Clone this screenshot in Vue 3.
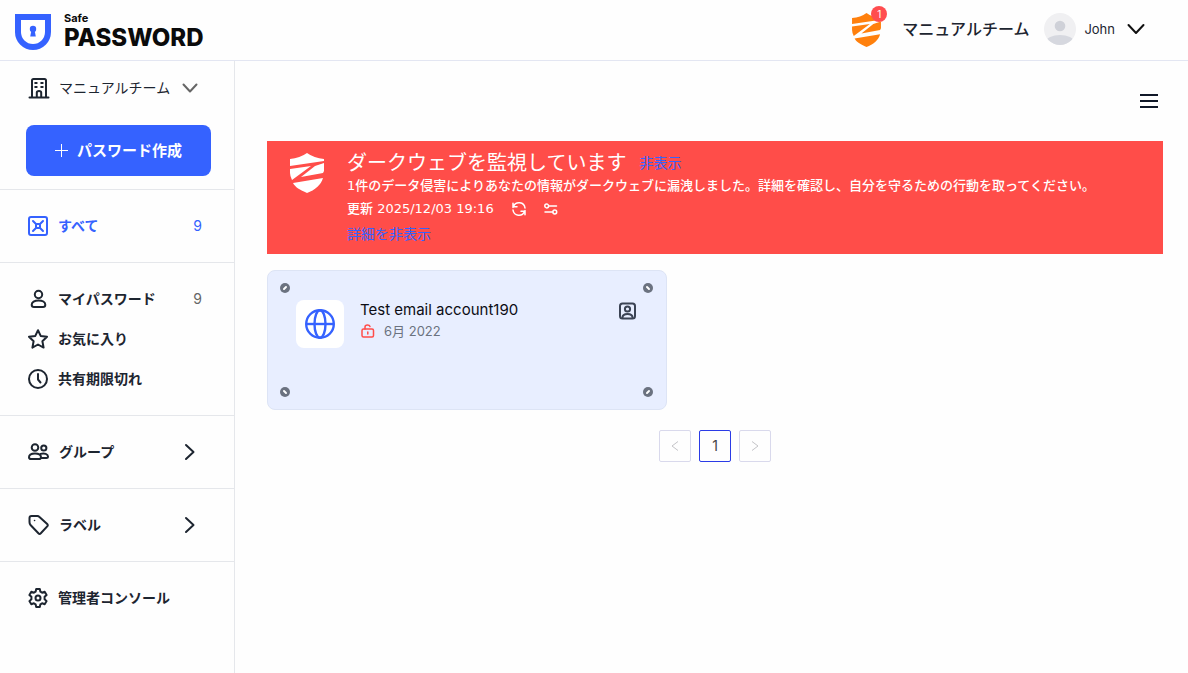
<script setup>
const mainItems = [
  { id: 'mine', label: 'マイパスワード', count: 9 },
  { id: 'star', label: 'お気に入り' },
  { id: 'clock', label: '共有期限切れ' },
]
const groups = [
  { id: 'group', label: 'グループ' },
  { id: 'label', label: 'ラベル' },
]
const screws = ['tl', 'tr', 'bl', 'br']
const shield = 'M0 6Q10 5 17 0q7 5 17 6v2L0 13zM0 16l21-3L2 27Q0 23 0 20zM34 10v8l-1 2-22 4 14-11zM3 30l30-5c-2 7-8 12-16 15C10 37 5 34 3 30z'
</script>

<template>
  <div class="app">
    <header class="header">
      <a href="#" class="brand">
        <svg width="36" height="36" viewBox="0 0 36 36">
          <path d="M0 0h36v18a18 18 0 0 1-36 0z" fill="#3562ff" />
          <path d="M6 6h24v12a12 12 0 0 1-24 0z" fill="#fff" />
          <circle cx="18" cy="15" r="3.200" fill="#3562ff" />
          <path d="M16.500 16h3l1.300 6.500h-5.600z" fill="#3562ff" />
        </svg>
        <span class="brand-text"><span class="brand-small">Safe</span><span class="brand-big">PASSWORD</span></span>
      </a>
      <div class="account">
        <button class="alert" aria-label="通知">
          <svg width="29" height="34" viewBox="0 0 34 40">
            <path :d="shield" fill="#ff800d" />
          </svg>
          <span class="badge">1</span>
        </button>
        <span class="team-name">マニュアルチーム</span>
        <button class="user">
          <svg width="32" height="32" viewBox="0 0 32 32">
            <defs><clipPath id="avatar-clip"><circle cx="16" cy="16" r="16" /></clipPath></defs>
            <g clip-path="url(#avatar-clip)">
              <path d="M0 0h32v32H0z" fill="#f0f0f2" />
              <circle cx="16" cy="13" r="5.300" fill="#cfd1d8" />
              <ellipse cx="16" cy="29" rx="14" ry="7" fill="#d6d8df" />
            </g>
          </svg>
          <span>John</span>
          <svg class="user-arrow" width="18" height="12" viewBox="0 0 18 12"><path d="m1.500 2 7.500 8 7.500-8" class="stroke thick" /></svg>
        </button>
      </div>
    </header>

    <div class="body">
      <aside class="sidebar">
        <div class="top">
          <button class="team">
            <svg width="22" height="22" viewBox="0 0 22 22" class="stroke">
              <path d="M1.500 20.500h19M4 20V3.500Q4 2 5.500 2h11Q18 2 18 3.500V20M8.800 20v-4.500q0-1.500 2.200-1.500t2.200 1.500V20" />
              <path d="M7.200 6h1.500M13.200 6h1.500M7.200 10h1.500M13.200 10h1.500" />
            </svg>
            <span>マニュアルチーム</span>
            <svg class="team-arrow" width="16" height="10" viewBox="0 0 16 10"><path d="m1.500 1.500 6.500 7 6.500-7" class="stroke grey" /></svg>
          </button>
          <button class="create">
            <svg width="13" height="13" viewBox="0 0 13 13"><path d="M6.500 0v13M0 6.500h13" stroke="#fff" fill="none" /></svg>
            <span>パスワード作成</span>
          </button>
        </div>

        <nav class="section">
          <a href="#" class="row active">
            <svg width="20" height="20" viewBox="0 0 20 20" class="stroke blue">
              <rect x="1" y="1" width="18" height="18" rx="2" />
              <path d="m5 5 3.500 3.500M15 5l-3.500 3.500M5 15l3.500-3.500M15 15l-3.500-3.500" />
              <rect x="8" y="8" width="4" height="4" rx="1" />
            </svg>
            <span>すべて</span><span class="count">9</span>
          </a>
        </nav>

        <nav class="section">
          <a v-for="item in mainItems" :key="item.id" href="#" class="row">
            <svg v-if="item.id === 'mine'" width="20" height="20" viewBox="0 0 20 20" class="stroke">
              <circle cx="10.500" cy="5.500" r="3.700" />
              <path d="M10.500 11.500c4 0 6.800 1.800 6.800 4.300 0 1.500-1 2.200-2.300 2.200H6c-1.300 0-2.300-.7-2.300-2.200 0-2.500 2.800-4.300 6.800-4.300z" />
            </svg>
            <svg v-else-if="item.id === 'star'" width="20" height="20" viewBox="0 0 20 20" class="stroke">
              <path d="m10 1.200 2.700 5.700 6.300.9-4.600 4.500 1.200 6.300L10 15.500l-5.600 3.100 1.200-6.300L1 7.800l6.300-.9z" />
            </svg>
            <svg v-else width="20" height="20" viewBox="0 0 20 20" class="stroke">
              <circle cx="10" cy="10" r="9" /><path d="M10 5v5.500l2.500 3" />
            </svg>
            <span>{{ item.label }}</span>
            <span v-if="item.count" class="count">{{ item.count }}</span>
          </a>
        </nav>

        <nav v-for="group in groups" :key="group.id" class="section">
          <button class="row">
            <svg v-if="group.id === 'group'" width="21" height="20" viewBox="0 0 21 20" class="stroke">
              <circle cx="7" cy="5.500" r="3.300" /><circle cx="15.800" cy="6" r="2.600" />
              <path d="M7 11.500c3.700 0 6 1.500 6 3.700 0 1.200-.8 1.800-2 1.800H3c-1.200 0-2-.6-2-1.800 0-2.200 2.300-3.700 6-3.700zM12.500 11.900c4-1.200 7.500.2 7.500 2.600 0 1-.7 1.500-1.700 1.500h-5.300" />
            </svg>
            <svg v-else width="21" height="20" viewBox="0 0 21 20" class="stroke">
              <path d="M1.500 7V3Q1.500 1 3.500 1h6q1 0 1.700.7l8 7.300q1.200 1.200 0 2.400l-6.400 6.900q-1.200 1.200-2.400 0L2.500 10q-1-1-1-3z" />
              <path d="M6.500 5.500h.1" stroke-width="1.500" />
            </svg>
            <span>{{ group.label }}</span>
            <svg class="chevron" width="12" height="18" viewBox="0 0 12 18"><path d="m2 2 7.500 7L2 16" class="stroke" /></svg>
          </button>
        </nav>

        <nav class="section last">
          <a href="#" class="row">
            <svg width="20" height="20" viewBox="0 0 20 20" class="stroke">
              <path d="M8.200 1h3.600l.6 2.700 1.700 1 2.600-.9 1.900 3.100-2 1.900v2.400l2 1.900-1.900 3.100-2.600-.9-1.700 1-.6 2.700H8.200l-.6-2.700-1.700-1-2.600.9-1.900-3.100 2-1.900V8.800l-2-1.900 1.900-3.100 2.600.9 1.700-1z" />
              <circle cx="10" cy="10" r="2.500" />
            </svg>
            <span>管理者コンソール</span>
          </a>
        </nav>
      </aside>

      <main class="main">
        <div class="toolbar">
          <button class="menu" aria-label="メニュー">
            <svg width="18" height="14" viewBox="0 0 18 14"><path d="M0 1h18M0 7h18M0 13h18" stroke="#101828" stroke-width="2" /></svg>
          </button>
        </div>

        <section class="banner">
          <svg class="banner-icon" width="34" height="40" viewBox="0 0 34 40">
            <path :d="shield" fill="#fff" />
          </svg>
          <div class="banner-text">
            <div class="banner-head"><h1>ダークウェブを監視しています</h1><a href="#">非表示</a></div>
            <p>1件のデータ侵害によりあなたの情報がダークウェブに漏洩しました。詳細を確認し、自分を守るための行動を取ってください。</p>
            <div class="updated">
              <span>更新 2025/12/03 19:16</span>
              <button aria-label="再読み込み">
                <svg width="14" height="14" viewBox="0 0 14 14" class="stroke white">
                  <path d="M1 5.500V1.200M1 4.800h4M1.500 4.500A6 6 0 0 1 13 6M13 8.500v4.300M13 9.200H9M12.500 9.500A6 6 0 0 1 1 8" />
                </svg>
              </button>
              <button aria-label="設定">
                <svg width="14" height="12" viewBox="0 0 14 12" class="stroke white">
                  <circle cx="2.700" cy="3" r="1.900" /><path d="M5 3h7.500M1 9h7.500" /><circle cx="10.800" cy="9" r="1.900" />
                </svg>
              </button>
            </div>
            <a href="#">詳細を非表示</a>
          </div>
        </section>

        <article class="card">
          <svg v-for="s in screws" :key="s" :class="['screw', s]" width="10" height="10" viewBox="0 0 10 10">
            <circle cx="5" cy="5" r="5" fill="#6b7280" /><path d="m4 6 2-2" stroke="#fff" stroke-width="2" stroke-linecap="round" />
          </svg>
          <div class="tile">
            <svg width="30" height="30" viewBox="0 0 30 30" fill="none" stroke="#3562ff" stroke-width="2.400">
              <circle cx="15" cy="15" r="13.800" /><ellipse cx="15" cy="15" rx="5.500" ry="13.800" /><path d="M1 15h28" />
            </svg>
          </div>
          <div class="info">
            <h2>Test email account190</h2>
            <div class="date">
              <svg width="14" height="14" viewBox="0 0 14 14" class="stroke red">
                <rect x="1" y="5" width="11.500" height="8" rx="1.500" /><path d="M4 5V3q0-2 2.500-2 2 0 2.500 1.500M6.800 8v2" />
              </svg>
              <span>6月 2022</span>
            </div>
          </div>
          <button class="contact" aria-label="アカウント">
            <svg width="17" height="18" viewBox="0 0 17 18" class="stroke slate">
              <rect x="1" y="1.500" width="15" height="15" rx="2.500" /><circle cx="8.500" cy="7" r="2.600" /><path d="M3.500 15.500c0-2.500 2-3.500 5-3.500s5 1 5 3.500" />
            </svg>
          </button>
        </article>

        <nav class="pages" aria-label="ページ">
          <button disabled aria-label="前"><svg width="8" height="12" viewBox="0 0 8 12"><path d="M7 1.500 1 6l6 4.500" fill="none" stroke="#c4c4c8" /></svg></button>
          <button class="current">1</button>
          <button disabled aria-label="次"><svg width="8" height="12" viewBox="0 0 8 12"><path d="m1 1.500 6 4.500-6 4.500" fill="none" stroke="#c4c4c8" /></svg></button>
        </nav>
      </main>
    </div>
  </div>
</template>

<style>
body { margin: 0; background: #fefefe; }
</style>

<style scoped>
.app { min-height: 100vh; display: flex; flex-direction: column; font: 14px/20px Inter, "Noto Sans CJK JP", sans-serif; color: #1d2530; }
.app * { box-sizing: border-box; }
button { font: inherit; color: inherit; border: 0; background: none; padding: 0; cursor: pointer; }
a { color: inherit; text-decoration: none; }
svg { display: block; flex: none; }
.stroke { fill: none; stroke: #1d2530; stroke-width: 2; stroke-linecap: round; stroke-linejoin: round; }
.grey { stroke: #666; }
.thick { stroke: #111; }
.blue { stroke: #3562ff; }
.white { stroke: #fff; stroke-width: 1.5; }
.red { stroke: #ff4d4a; stroke-width: 1.5; }
.slate { stroke: #3b4354; }
.header { height: 61px; display: flex; align-items: center; justify-content: space-between; padding: 0 43px 0 15px; border-bottom: 1px solid #e3e6f2; }
.brand { display: flex; align-items: center; gap: 13px; padding-top: 4px; color: #0b0b0b; }
.brand-text { display: flex; flex-direction: column; }
.brand-small { font-size: 11px; line-height: 12px; font-weight: 700; }
.brand-big { font-size: 24px; line-height: 28px; font-weight: 800; }
.account { display: flex; align-items: center; }
.alert { position: relative; margin-right: 21px; }
.badge { position: absolute; top: -7px; right: -6px; width: 16px; height: 16px; border-radius: 8px; background: #ff4d4f; color: #fff; font-size: 10px; line-height: 16px; text-align: center; }
.team-name { font-size: 16px; line-height: 20px; font-weight: 500; padding-bottom: 3px; margin-right: 15px; }
.user { display: flex; align-items: center; gap: 8px; padding-bottom: 2px; }
.user span { font-size: 13px; }
.user-arrow { margin-left: 4px; }
.body { flex: 1; display: flex; }
.sidebar { flex: 0 0 235px; border-right: 1px solid #e5e7eb; }
.top { padding: 7px 23px 13px 26px; border-bottom: 1px solid #e5e7eb; }
.team { display: flex; align-items: center; gap: 9px; height: 40px; padding-left: 2px; }
.team-arrow { margin-left: 3px; }
.create { display: flex; align-items: center; justify-content: center; gap: 9px; width: 100%; height: 51px; margin-top: 17px; border-radius: 8px; background: #3562ff; color: #fff; font-size: 15px; font-weight: 700; }
.section { padding: 16px 32px 16px 28px; border-bottom: 1px solid #e5e7eb; }
.last { border-bottom: 0; }
.row { display: flex; align-items: center; gap: 10px; width: 100%; height: 40px; font-weight: 700; }
.active { color: #3562ff; }
.count { margin-left: auto; font-weight: 400; color: #666; }
.active .count { color: #3562ff; }
.chevron { margin-left: auto; margin-right: 6px; }
.main { flex: 1; min-width: 0; padding: 0 25px 0 32px; }
.toolbar { height: 80px; display: flex; align-items: center; justify-content: flex-end; padding-right: 5px; }
.banner { display: flex; gap: 23px; padding: 10px 23px 8px; background: #ff4d49; color: #fff; }
.banner-icon { margin-top: 2px; }
.banner-head { display: flex; align-items: center; gap: 13px; }
.banner h1 { margin: 0; font-size: 20px; line-height: 24px; font-weight: 400; }
.banner p, .updated { font-family: "DejaVu Sans", "Noto Sans CJK JP", sans-serif; font-size: 13px; line-height: 22px; }
.banner p { margin: 0; font-weight: 500; }
.banner a { display: block; color: #3562ff; line-height: 24px; }
.updated { display: flex; align-items: center; gap: 18px; height: 24px; margin-bottom: 1px; font-weight: 500; }
.card { position: relative; display: flex; align-items: flex-start; width: 400px; max-width: 100%; min-height: 140px; margin-top: 16px; padding: 29px 30px 29px 28px; border: 1px solid #dde4f5; border-radius: 8px; background: #e8eeff; }
.screw { position: absolute; }
.tl { left: 12px; top: 12px; }
.tr { right: 13px; top: 12px; transform: scaleX(-1); }
.bl { left: 12px; bottom: 12px; transform: scaleX(-1); }
.br { right: 13px; bottom: 12px; }
.tile { width: 48px; height: 48px; display: grid; place-items: center; border-radius: 8px; background: #fff; }
.info { flex: 1; margin-left: 16px; }
.info h2 { margin: 0; font-size: 15px; line-height: 20px; font-weight: 400; color: #0c0c14; }
.date { display: flex; align-items: center; gap: 9px; height: 22px; padding-left: 1px; font-size: 13px; color: #6b7280; }
.contact { margin-top: 2px; }
.pages { display: flex; justify-content: center; gap: 8px; margin-top: 20px; }
.pages button { width: 32px; height: 32px; display: grid; place-items: center; border: 1px solid #d9d9ec; border-radius: 2px; color: #444; }
.pages .current { border-color: #2b3be6; }
</style>
